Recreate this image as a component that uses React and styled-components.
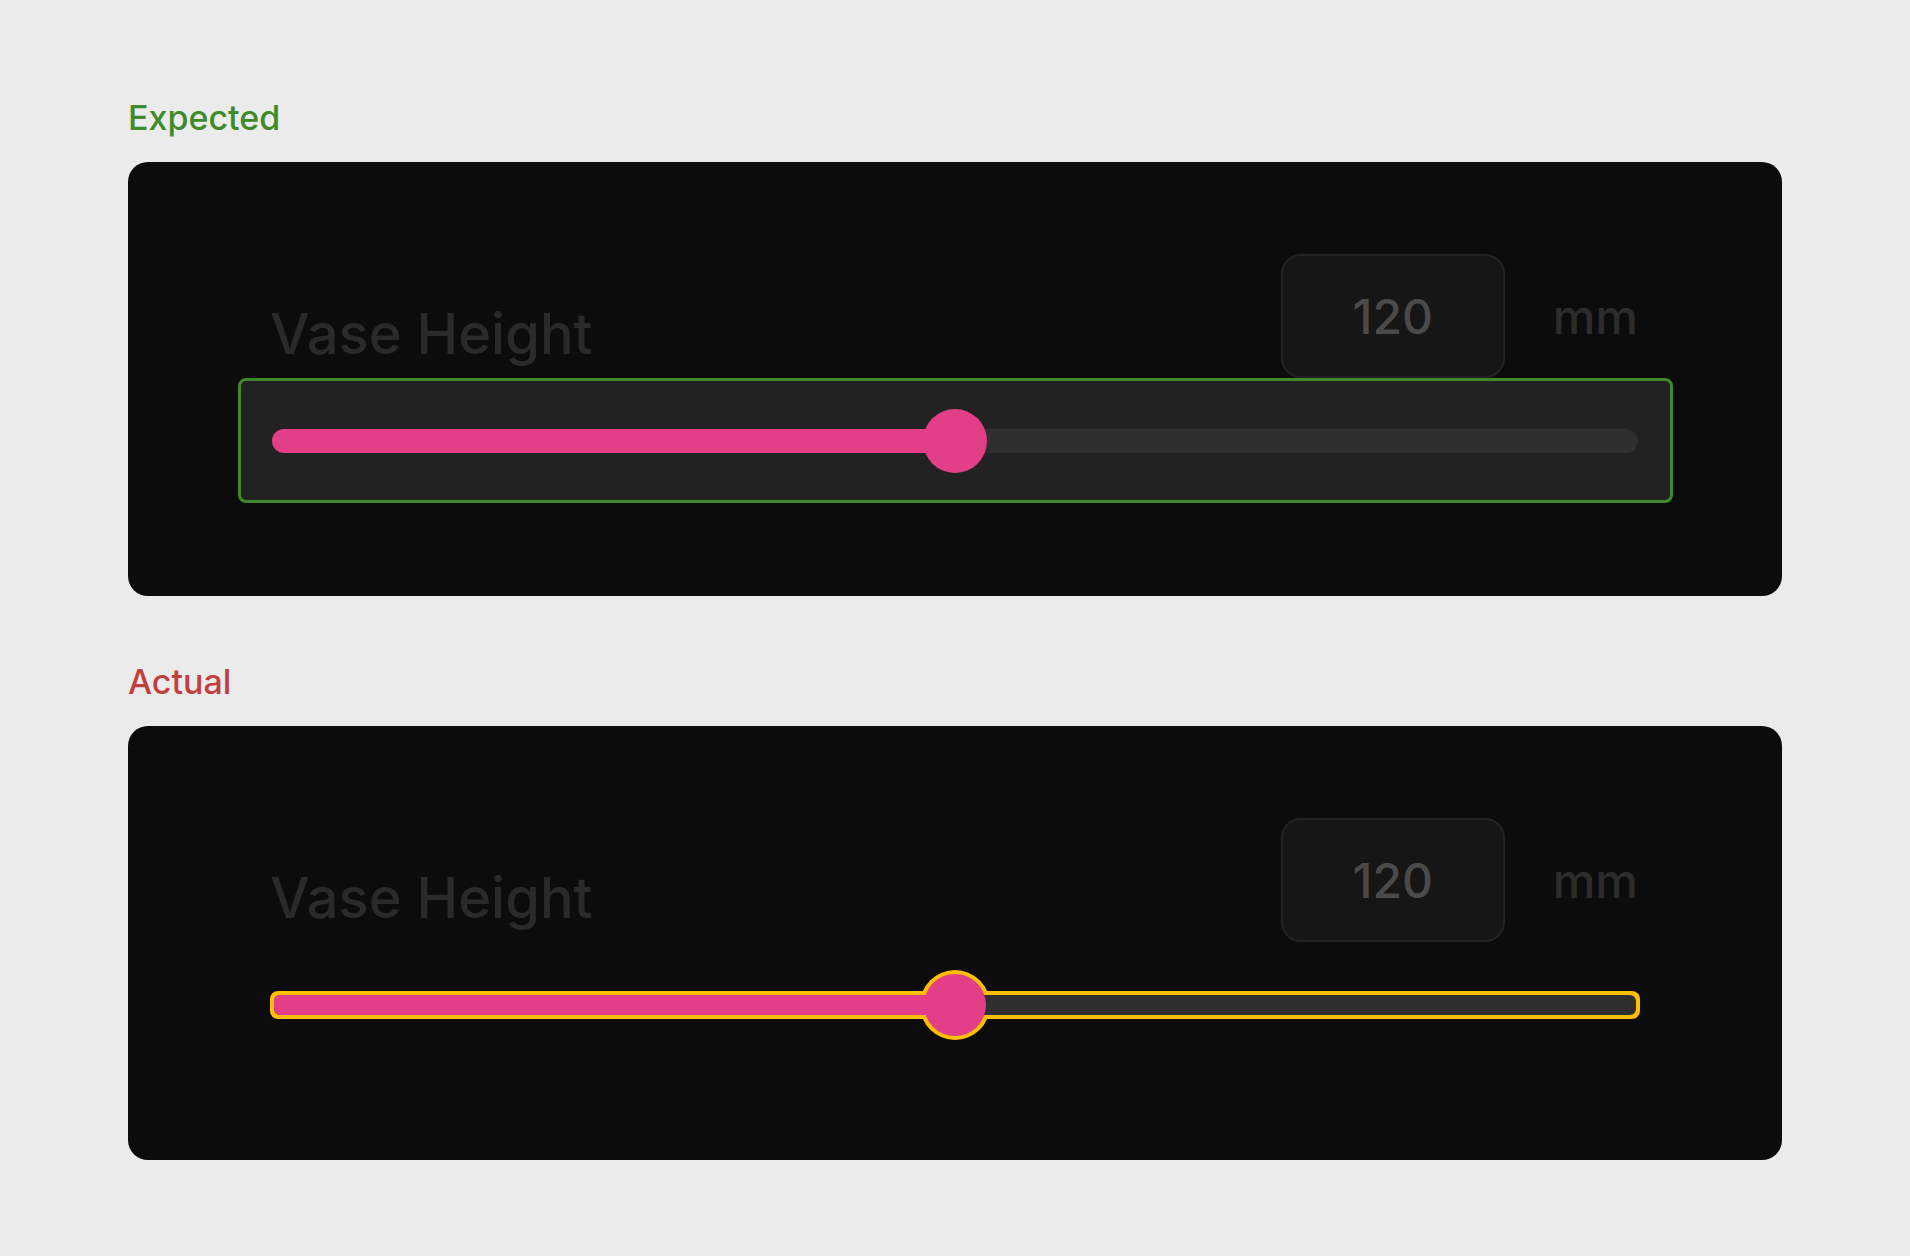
import React from "react";
import styled, { createGlobalStyle } from "styled-components";

const GlobalStyle = createGlobalStyle`
  html, body { margin: 0; padding: 0; }
  body {
    background: #ebebeb;
    font-family: Inter, "Noto Sans", "Liberation Sans", sans-serif;
  }
`;

const PINK = "#e33f89";
const YELLOW = "#ffbf00";

const Page = styled.div`
  display: flex;
  flex-direction: column;
  gap: 66px;
  padding: 98px 128px 96px;
`;

const Section = styled.section`
  display: flex;
  flex-direction: column;
  gap: 24px;
`;

const Caption = styled.div`
  font-size: 34px;
  line-height: 40px;
  font-weight: 500;
  color: ${(p) => p.$color};
`;

const Card = styled.div`
  box-sizing: border-box;
  height: 434px;
  background: #0c0c0c;
  border-radius: 20px;
  padding: 92px 144px;
  display: flex;
  flex-direction: column;
`;

const Header = styled.div`
  height: 124px;
  display: flex;
  justify-content: space-between;
  align-items: flex-end;
`;

const FieldLabel = styled.div`
  font-size: 56px;
  line-height: 56px;
  margin-bottom: 16px;
  margin-left: -2px;
  color: #2a2a2a;
  font-weight: 500;
`;

const ValueGroup = styled.div`
  align-self: stretch;
  display: flex;
  align-items: center;
  gap: 48px;
`;

const ValueBox = styled.div`
  box-sizing: border-box;
  width: 224px;
  height: 124px;
  border: 2px solid #232323;
  border-radius: 20px;
  background: #161616;
  display: flex;
  align-items: center;
  justify-content: center;
  font-size: 48px;
  color: #4a4a4a;
  font-weight: 500;
`;

const Unit = styled.div`
  font-size: 48px;
  color: #2c2c2c;
  font-weight: 500;
`;

const SliderArea = styled.div`
  box-sizing: border-box;
  height: 125px;
  display: flex;
  align-items: center;
  ${(p) =>
    p.$highlight
      ? `
    margin: 0 -35px 0 -34px;
    padding: 0 32px 0 31px;
    border: 3px solid #3f8a2b;
    border-radius: 8px;
    background: #222222;
  `
      : ``}
`;

const Track = styled.div`
  position: relative;
  flex: 1;
  height: 24px;
`;

const OutlineBar = styled.div`
  position: absolute;
  inset: -2px;
  background: ${YELLOW};
  border-radius: 8px;
`;

const Rail = styled.div`
  position: absolute;
  inset: ${(p) => p.$inset}px;
  background: #2f2f2f;
  border-radius: ${(p) => p.$radius}px;
`;

const Fill = styled.div`
  position: absolute;
  top: ${(p) => p.$inset}px;
  bottom: ${(p) => p.$inset}px;
  left: ${(p) => p.$inset}px;
  background: ${PINK};
  border-radius: ${(p) => p.$radius}px 0 0 ${(p) => p.$radius}px;
`;

const Knob = styled.div`
  position: absolute;
  top: 50%;
  width: ${(p) => p.$size}px;
  height: ${(p) => p.$size}px;
  border-radius: 50%;
  background: ${(p) => p.$color};
  transform: translate(-50%, -50%);
`;

function Slider({ value, min, max, outlined }) {
  const pct = ((value - min) / (max - min)) * 100;
  const inset = outlined ? 2 : 0;
  const radius = outlined ? 6 : 12;
  return (
    <Track>
      {outlined && <OutlineBar />}
      {outlined && <Knob $size={70} $color={YELLOW} style={{ left: `${pct}%` }} />}
      <Rail $inset={inset} $radius={radius} />
      <Fill $inset={inset} $radius={radius} style={{ width: `${pct}%` }} />
      <Knob $size={outlined ? 62 : 64} $color={PINK} style={{ left: `${pct}%` }} />
    </Track>
  );
}

function VaseCard({ highlight, outlined }) {
  return (
    <Card>
      <Header>
        <FieldLabel>Vase Height</FieldLabel>
        <ValueGroup>
          <ValueBox>120</ValueBox>
          <Unit>mm</Unit>
        </ValueGroup>
      </Header>
      <SliderArea $highlight={highlight}>
        <Slider value={120} min={40} max={200} outlined={outlined} />
      </SliderArea>
    </Card>
  );
}

export default function App() {
  return (
    <>
      <GlobalStyle />
      <Page>
        <Section>
          <Caption $color="#3f8a2b">Expected</Caption>
          <VaseCard highlight />
        </Section>
        <Section>
          <Caption $color="#c03f3f">Actual</Caption>
          <VaseCard outlined />
        </Section>
      </Page>
    </>
  );
}
